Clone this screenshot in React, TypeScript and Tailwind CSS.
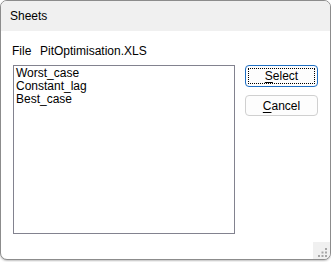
import { ReactNode } from 'react';

const font = { fontFamily: '"Segoe UI", "Liberation Sans", Arial, sans-serif' };

function DialogButton({ children, focused }: { children: ReactNode; focused?: boolean }) {
  return (
    <button
      className={
        focused
          ? 'w-[73px] h-[22px] rounded-[4px] border border-[#1f6fc4] bg-[#fdfdfd] p-[2px] text-[12px] leading-none text-black'
          : 'w-[73px] h-[21px] rounded-[4px] border border-[#d0d0d0] bg-[#fdfdfd] p-[2px] text-[12px] leading-none text-black'
      }
    >
      <span
        className={
          focused
            ? 'flex h-full w-full items-center justify-center border border-dotted border-black'
            : 'flex h-full w-full items-center justify-center border border-transparent'
        }
      >
        {children}
      </span>
    </button>
  );
}

function SizeGrip() {
  const dots = [
    [12, 6],
    [12, 9.5],
    [8.5, 9.5],
    [12, 13],
    [8.5, 13],
    [5, 13],
  ];
  return (
    <div className="absolute right-0 bottom-0 w-[17px] h-[17px] bg-[#f0f0f0]">
      <svg width="17" height="17" viewBox="0 0 17 17" className="absolute inset-0">
        {dots.map(([x, y], i) => (
          <rect key={i} x={x} y={y} width="2" height="2" fill="#a6a6a6" />
        ))}
      </svg>
    </div>
  );
}

export default function App() {
  return (
    <div className="w-[331px] h-[262px] bg-white" style={font}>
      <div className="relative flex h-[260px] w-[331px] flex-col overflow-hidden rounded-[7px] border border-[#8c8c8c] bg-white shadow-[0_1px_2px_rgba(0,0,0,0.25)]">
        {/* Title */}
        <div className="flex h-[30px] items-center bg-[#f0f0f0] pl-[9px] text-[12px] text-black">
          Sheets
        </div>

        {/* Body */}
        <div className="flex flex-col pt-[13px] text-[12px] leading-[14px] text-black">
          <div className="flex pl-[11px]">
            <span className="w-[28px]">File</span>
            <span>PitOptimisation.XLS</span>
          </div>

          <div className="mt-[7px] flex items-start pl-[12px]">
            <div className="h-[169px] w-[222px] border border-[#82828f] pl-[2px] pt-[1px] leading-[13px]">
              <div>Worst_case</div>
              <div>Constant_lag</div>
              <div>Best_case</div>
            </div>

            <div className="ml-[10px] flex flex-col gap-[8px]">
              <DialogButton focused>
                <span className="underline underline-offset-2">S</span>elect
              </DialogButton>
              <DialogButton>
                <span className="underline underline-offset-2">C</span>ancel
              </DialogButton>
            </div>
          </div>
        </div>

        <SizeGrip />
      </div>
    </div>
  );
}
